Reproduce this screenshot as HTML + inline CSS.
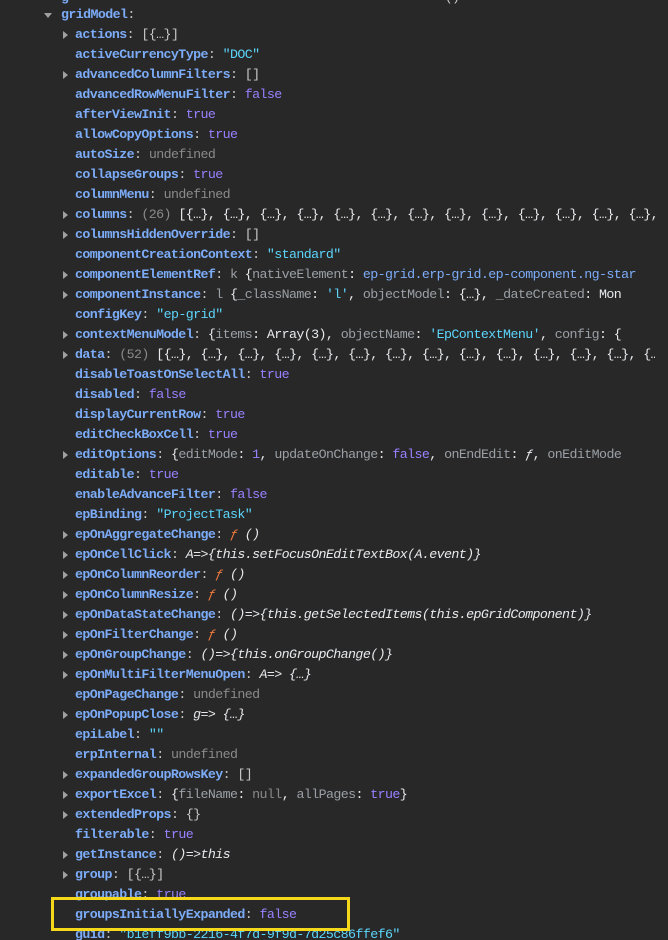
<!DOCTYPE html>
<html><head><meta charset="utf-8"><style>
html,body{margin:0;padding:0;background:#282828;width:668px;height:940px;overflow:hidden}
#c{position:absolute;left:0;top:0;width:655px;height:940px;overflow:hidden}
.r{position:absolute;left:0;height:20px;line-height:20px;white-space:pre;font-family:"Liberation Mono",monospace;font-size:13.3px;letter-spacing:-0.6px;color:#e8eaed}
.k{color:#7cacf8;font-weight:bold}
.p{color:#c8c8c8}
.s{color:#5cd5fb}
.b{color:#9980ff}
.u{color:#8a8a8a}
.g{color:#9aa0a6}
.i{font-style:italic}
.f{color:#f07a3e;font-style:italic}
.a{position:absolute;width:0;height:0;border-top:4px solid transparent;border-bottom:4px solid transparent;border-left:5px solid #a0a0a0}
.d{position:absolute;width:0;height:0;border-left:4px solid transparent;border-right:4px solid transparent;border-top:5px solid #a0a0a0}
#box{position:absolute;left:51px;top:897px;width:293px;height:28px;border:3px solid #f6d81a}
</style></head><body><div id="c">
<div class="r" style="top:-12px;left:61px"><span class="k">g</span>                                                   <span class="p">()</span></div>
<div class="d" style="left:44px;top:13px"></div>
<div class="r" style="top:5px;left:61px"><span class="k">gridModel</span><span class="p">:</span></div>
<div id="rows"></div>
</div>
<div id="box"></div>
<script>
var R=[
[1,'actions','<span class="p">[{…}]</span>'],
[0,'activeCurrencyType','<span class="s">"DOC"</span>'],
[1,'advancedColumnFilters','<span class="p">[]</span>'],
[0,'advancedRowMenuFilter','<span class="b">false</span>'],
[0,'afterViewInit','<span class="b">true</span>'],
[0,'allowCopyOptions','<span class="b">true</span>'],
[0,'autoSize','<span class="u">undefined</span>'],
[0,'collapseGroups','<span class="b">true</span>'],
[0,'columnMenu','<span class="u">undefined</span>'],
[1,'columns','<span class="u">(26)</span> [{…}, {…}, {…}, {…}, {…}, {…}, {…}, {…}, {…}, {…}, {…}, {…}, {…}, {…}, {…}'],
[1,'columnsHiddenOverride','<span class="p">[]</span>'],
[0,'componentCreationContext','<span class="s">"standard"</span>'],
[1,'componentElementRef','<span class="g">k</span> {<span class="g">nativeElement</span>: <span class="s" style="color:#7cacf8">ep-grid.erp-grid.ep-component.ng-star</span>'],
[1,'componentInstance','<span class="g">l</span> {<span class="g">_className</span>: <span class="s">\'l\'</span>, <span class="g">objectModel</span>: {…}, <span class="g">_dateCreated</span>: Mon'],
[0,'configKey','<span class="s">"ep-grid"</span>'],
[1,'contextMenuModel','{<span class="g">items</span>: Array(3), <span class="g">objectName</span>: <span class="s">\'EpContextMenu\'</span>, <span class="g">config</span>: {'],
[1,'data','<span class="u">(52)</span> [{…}, {…}, {…}, {…}, {…}, {…}, {…}, {…}, {…}, {…}, {…}, {…}, {…}, {…}, {…}, {…}'],
[0,'disableToastOnSelectAll','<span class="b">true</span>'],
[0,'disabled','<span class="b">false</span>'],
[0,'displayCurrentRow','<span class="b">true</span>'],
[0,'editCheckBoxCell','<span class="b">true</span>'],
[1,'editOptions','{<span class="g">editMode</span>: <span class="b">1</span>, <span class="g">updateOnChange</span>: <span class="b">false</span>, <span class="g">onEndEdit</span>: <span class="i">ƒ</span>, <span class="g">onEditMode</span>'],
[0,'editable','<span class="b">true</span>'],
[0,'enableAdvanceFilter','<span class="b">false</span>'],
[0,'epBinding','<span class="s">"ProjectTask"</span>'],
[1,'epOnAggregateChange','<span class="f">ƒ</span> <span class="i">()</span>'],
[1,'epOnCellClick','<span class="i">A=&gt;{this.setFocusOnEditTextBox(A.event)}</span>'],
[1,'epOnColumnReorder','<span class="f">ƒ</span> <span class="i">()</span>'],
[1,'epOnColumnResize','<span class="f">ƒ</span> <span class="i">()</span>'],
[1,'epOnDataStateChange','<span class="i">()=&gt;{this.getSelectedItems(this.epGridComponent)}</span>'],
[1,'epOnFilterChange','<span class="f">ƒ</span> <span class="i">()</span>'],
[1,'epOnGroupChange','<span class="i">()=&gt;{this.onGroupChange()}</span>'],
[1,'epOnMultiFilterMenuOpen','<span class="i">A=&gt; {…}</span>'],
[0,'epOnPageChange','<span class="u">undefined</span>'],
[1,'epOnPopupClose','<span class="i">g=&gt; {…}</span>'],
[0,'epiLabel','<span class="s">""</span>'],
[0,'erpInternal','<span class="u">undefined</span>'],
[1,'expandedGroupRowsKey','<span class="p">[]</span>'],
[1,'exportExcel','{<span class="g">fileName</span>: <span class="u">null</span>, <span class="g">allPages</span>: <span class="b">true</span>}'],
[1,'extendedProps','<span class="p">{}</span>'],
[0,'filterable','<span class="b">true</span>'],
[1,'getInstance','<span class="i">()=&gt;this</span>'],
[1,'group','<span class="p">[{…}]</span>'],
[0,'groupable','<span class="b">true</span>'],
[0,'groupsInitiallyExpanded','<span class="b">false</span>'],
[0,'guid','<span class="s">"b1eff9bb-2216-4f7d-9f9d-7d25c86ffef6"</span>']
];
var h='';
R.forEach(function(r,i){var t=25+i*20;
if(r[0])h+='<div class="a" style="left:63px;top:'+(t+6)+'px"></div>';
h+='<div class="r" style="top:'+t+'px;left:75px"><span class="k">'+r[1]+'</span><span class="p">: </span>'+r[2]+'</div>';});
document.getElementById('rows').outerHTML=h;
</script>
</body></html>
